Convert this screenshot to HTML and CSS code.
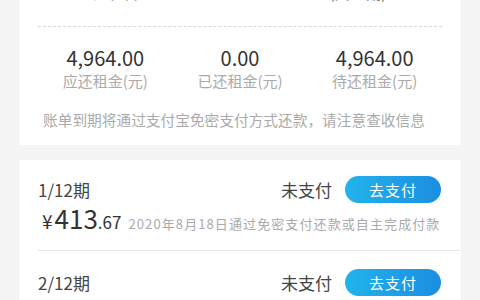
FILE: index.html
```html
<!DOCTYPE html>
<html lang="zh">
<head>
<meta charset="utf-8">
<link rel="stylesheet" href="styles.css">
</head>
<body>
<div class="page">
  <section class="card summary">
    <div class="period">起租日 2020-08-18　至 2021-07-18(共12期)</div>
    <div class="stats">
      <div class="stat"><div class="num">4,964.00</div><div class="label">应还租金(元)</div></div>
      <div class="stat"><div class="num">0.00</div><div class="label">已还租金(元)</div></div>
      <div class="stat"><div class="num">4,964.00</div><div class="label">待还租金(元)</div></div>
    </div>
    <div class="note">账单到期将通过支付宝免密支付方式还款，请注意查收信息</div>
  </section>
  <section class="card list">
    <div class="item">
      <div class="head">
        <span class="term">1/12期</span>
        <span class="status">未支付</span>
        <button class="pay">去支付</button>
      </div>
      <div class="amount-row">
        <span class="amount"><span class="yen">¥</span><span class="int">413</span><span class="dec">.67</span></span>
        <span class="desc">2020年8月18日通过免密支付还款或自主完成付款</span>
      </div>
    </div>
    <div class="item">
      <div class="head">
        <span class="term">2/12期</span>
        <span class="status">未支付</span>
        <button class="pay">去支付</button>
      </div>
      <div class="amount-row">
        <span class="amount"><span class="yen">¥</span><span class="int">413</span><span class="dec">.67</span></span>
        <span class="desc">2020年9月18日通过免密支付还款或自主完成付款</span>
      </div>
    </div>
  </section>
</div>
</body>
</html>
```
FILE: styles.css
```css
html, body {
  margin: 0;
  padding: 0;
  background: #f4f4f4;
  height: 300px;
  overflow: hidden;
}
body {
  font-family: "Noto Sans CJK SC", "Noto Sans", sans-serif;
  color: #333;
}
.page {
  padding: 0 19px;
  display: flex;
  flex-direction: column;
  gap: 15px;
}
.card {
  background: #fff;
}
.summary {
  margin-top: -17px;
  padding: 0 19px 16px;
}
.period {
  height: 20px;
  line-height: 20px;
  text-align: center;
  font-size: 15px;
  color: #777;
  white-space: nowrap;
}
.stats {
  margin-top: 23px;
  border-top: 1px dashed #d8d8d8;
  padding-top: 20px;
  display: grid;
  grid-template-columns: 1fr 1fr 1fr;
  text-align: center;
}
.num {
  font-size: 20px;
  line-height: 22px;
  color: #333;
}
.label {
  margin-top: 3px;
  font-size: 15px;
  line-height: 18px;
  color: #aaa;
}
.note {
  margin-top: 21px;
  padding-left: 5px;
  font-size: 14.7px;
  line-height: 18px;
  color: #aaa;
  white-space: nowrap;
}
.item {
  margin-left: 19px;
  padding: 16px 20px 23px 0;
  border-bottom: 1px solid #e6e6e6;
}
.item + .item {
  padding-top: 18px;
}
.head {
  display: flex;
  align-items: center;
  height: 27px;
}
.term {
  font-size: 17px;
  color: #444;
  flex: 1;
}
.status {
  font-size: 17px;
  color: #444;
  margin-right: 13px;
}
.pay {
  width: 96px;
  height: 27px;
  border: none;
  border-radius: 14px;
  background: linear-gradient(90deg, #22b3ec, #1b8ee1);
  color: #fff;
  font-family: inherit;
  font-size: 15px;
  padding: 0;
  letter-spacing: 1px;
}
.amount-row {
  margin-top: -4px;
  height: 28px;
  display: flex;
  align-items: baseline;
  white-space: nowrap;
}
.amount {
  color: #333;
  margin-left: 4px;
  margin-right: 7px;
}
.yen { font-size: 19px; margin-right: 2px; color: #333; }
.int { font-size: 26px; }
.dec { font-size: 17px; }
.desc {
  font-size: 13px;
  color: #aaa;
  letter-spacing: 1.1px;
}
```
